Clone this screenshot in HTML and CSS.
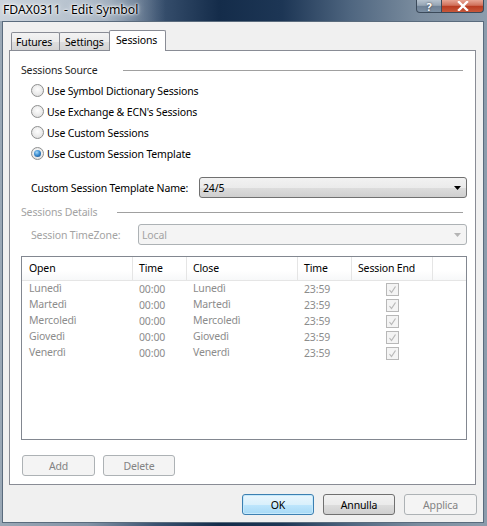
FILE: index.html
```html
<!DOCTYPE html>
<html>
<head>
<meta charset="utf-8">
<link rel="stylesheet" href="styles.css">
</head>
<body>
<div class="window">
  <div class="titlebar">
    <span class="title">FDAX0311 - Edit Symbol</span>
    <div class="caption-btns">
      <div class="cap help">?</div>
      <div class="cap close">
        <svg width="14" height="10" viewBox="0 0 14 10"><path d="M3 1 L11 9 M11 1 L3 9" stroke="#fff" stroke-width="2.4" stroke-linecap="square"/></svg>
      </div>
    </div>
  </div>
  <div class="client">
    <div class="tabs">
      <div class="tab t-futures">Futures</div>
      <div class="tab t-settings">Settings</div>
      <div class="tab t-sessions active">Sessions</div>
    </div>
    <div class="panel">
      <div class="section">
        <span class="sec-label src">Sessions Source</span>
        <span class="sec-line"></span>
      </div>
      <div class="radios">
        <div class="radio-row"><span class="radio"></span><span>Use Symbol Dictionary Sessions</span></div>
        <div class="radio-row"><span class="radio"></span><span>Use Exchange &amp; ECN's Sessions</span></div>
        <div class="radio-row"><span class="radio"></span><span>Use Custom Sessions</span></div>
        <div class="radio-row"><span class="radio checked"></span><span>Use Custom Session Template</span></div>
      </div>
      <div class="field-row tpl-row">
        <span class="field-label tpl-label">Custom Session Template Name:</span>
        <div class="combo tpl-combo">
          <span class="combo-text">24/5</span>
          <svg class="arrow" width="7" height="4" viewBox="0 0 7 4"><path d="M0 0 H7 L3.5 4 Z" fill="#000"/></svg>
        </div>
      </div>
      <div class="section details">
        <span class="sec-label det">Sessions Details</span>
        <span class="sec-line"></span>
      </div>
      <div class="field-row tz-row">
        <span class="field-label tz-label disabled">Session TimeZone:</span>
        <div class="combo tz-combo disabled-combo">
          <span class="combo-text">Local</span>
          <svg class="arrow" width="7" height="4" viewBox="0 0 7 4"><path d="M0 0 H7 L3.5 4 Z" fill="#b4b4b4"/></svg>
        </div>
      </div>
      <div class="list">
        <div class="list-head">
          <div class="col c-open">Open</div>
          <div class="col c-time">Time</div>
          <div class="col c-close">Close</div>
          <div class="col c-time">Time</div>
          <div class="col c-end">Session End</div>
          <div class="col c-fill"></div>
        </div>
        <div class="list-body">
          <div class="list-row">
            <div class="cell c-open day">Lunedì</div><div class="cell c-time">00:00</div>
            <div class="cell c-close day">Lunedì</div><div class="cell c-time">23:59</div>
            <div class="cell c-end chk-cell"><span class="chk"><svg width="11" height="11" viewBox="0 0 11 11"><path d="M2.5 6 L4.5 8.5 L8.5 2.5" fill="none" stroke="#b8b8b8" stroke-width="1.2"/></svg></span></div>
          </div>
          <div class="list-row">
            <div class="cell c-open day">Martedì</div><div class="cell c-time">00:00</div>
            <div class="cell c-close day">Martedì</div><div class="cell c-time">23:59</div>
            <div class="cell c-end chk-cell"><span class="chk"><svg width="11" height="11" viewBox="0 0 11 11"><path d="M2.5 6 L4.5 8.5 L8.5 2.5" fill="none" stroke="#b8b8b8" stroke-width="1.2"/></svg></span></div>
          </div>
          <div class="list-row">
            <div class="cell c-open day">Mercoledì</div><div class="cell c-time">00:00</div>
            <div class="cell c-close day">Mercoledì</div><div class="cell c-time">23:59</div>
            <div class="cell c-end chk-cell"><span class="chk"><svg width="11" height="11" viewBox="0 0 11 11"><path d="M2.5 6 L4.5 8.5 L8.5 2.5" fill="none" stroke="#b8b8b8" stroke-width="1.2"/></svg></span></div>
          </div>
          <div class="list-row">
            <div class="cell c-open day">Giovedì</div><div class="cell c-time">00:00</div>
            <div class="cell c-close day">Giovedì</div><div class="cell c-time">23:59</div>
            <div class="cell c-end chk-cell"><span class="chk"><svg width="11" height="11" viewBox="0 0 11 11"><path d="M2.5 6 L4.5 8.5 L8.5 2.5" fill="none" stroke="#b8b8b8" stroke-width="1.2"/></svg></span></div>
          </div>
          <div class="list-row">
            <div class="cell c-open day">Venerdì</div><div class="cell c-time">00:00</div>
            <div class="cell c-close day">Venerdì</div><div class="cell c-time">23:59</div>
            <div class="cell c-end chk-cell"><span class="chk"><svg width="11" height="11" viewBox="0 0 11 11"><path d="M2.5 6 L4.5 8.5 L8.5 2.5" fill="none" stroke="#b8b8b8" stroke-width="1.2"/></svg></span></div>
          </div>
        </div>
      </div>
      <div class="list-buttons">
        <div class="btn disabled-btn w73">Add</div>
        <div class="btn disabled-btn">Delete</div>
      </div>
    </div>
    <div class="dlg-buttons">
      <div class="btn default-btn">OK</div>
      <div class="btn">Annulla</div>
      <div class="btn disabled-btn w73">Applica</div>
    </div>
  </div>
</div>
</body>
</html>
```
FILE: styles.css
```css
* { box-sizing: border-box; }
html, body { margin: 0; padding: 0; }
body {
  width: 487px; height: 526px; overflow: hidden;
  font-family: "Noto Sans", "Open Sans", sans-serif;
  font-size: 10.5px;
  letter-spacing: -0.15px;
  color: #000;
}
.window {
  width: 487px; height: 526px;
  display: flex; flex-direction: column;
  background: linear-gradient(90deg, #9aa8b6 0%, #8393a6 18%, #3a5270 32%, #142c4a 45%, #1d3655 58%, #4f6680 72%, #7b8d9f 86%, #8c9cac 100%);
}
.titlebar {
  height: 21px; flex: none;
  display: flex; align-items: flex-start; justify-content: space-between;
  background: linear-gradient(90deg, rgba(215,222,230,0.8) 0%, rgba(200,210,220,0.6) 22%, rgba(200,210,220,0) 34%);
}
.title {
  font-size: 12.2px; line-height: 18px; padding-left: 3px; padding-top: 1px;
  letter-spacing: 0;
  color: #000;
  text-shadow: 0 0 6px #fff, 0 0 3px #fff, 0 0 2px #fff;
}
.caption-btns { display: flex; margin-right: 3px; }
.cap {
  height: 13px; border: 1px solid #3b4a5a; border-top: none;
  display: flex; align-items: center; justify-content: center;
  color: #fff; font-weight: bold; font-size: 11px; line-height: 11px;
}
.help {
  width: 26px; border-radius: 0 0 0 4px;
  background: linear-gradient(#b7c3cf 0%, #97a6b5 45%, #6f8195 50%, #7c8fa3 100%);
  text-shadow: 0 0 2px #333;
}
.close {
  width: 42px; border-left: none; border-radius: 0 0 4px 0;
  background: linear-gradient(#e7a594 0%, #d0705a 45%, #b83a20 50%, #c8583a 100%);
}
.client {
  flex: 1;
  margin: 0 3px 3px 2px;
  border: 1px solid #5a6b7d;
  background: #f0f0f0;
  display: flex; flex-direction: column;
}
.tabs {
  margin-top: 8px; margin-left: 8px;
  height: 20px;
  display: flex; align-items: flex-end;
  position: relative; z-index: 2;
}
.tab {
  height: 18px;
  border: 1px solid #898c95; border-bottom: none;
  background: linear-gradient(#f3f3f3 0%, #ebebeb 50%, #dedede 51%, #d4d4d4 100%);
  line-height: 18px;
  border-radius: 2px 2px 0 0;
}
.t-futures { width: 49px; padding-left: 4px; }
.t-settings { width: 51px; margin-left: -1px; padding-left: 5px; }
.t-sessions { width: 57px; margin-left: -1px; padding-left: 6px; }
.tab.active {
  height: 21px; margin-bottom: -1px;
  background: #fff; line-height: 19px;
}
.panel {
  margin-left: 6px;
  width: 467px; height: 435px;
  border: 1px solid #898c95;
  background: #fff;
  display: flex; flex-direction: column;
  padding-left: 11px; padding-right: 8px;
}
.section {
  margin-top: 11px; height: 16px;
  display: flex; align-items: center;
}
.section.details { margin-top: 6px; }
.sec-label { line-height: 16px; flex: none; }
.src { width: 102px; color: #1e1e1e; }
.det { width: 96px; color: #a3a3a3; }
.sec-line { flex: 1; height: 1px; background: #a0a0a0; margin-right: 4px; margin-top: 1px; }
.radios { margin-top: 2px; display: flex; flex-direction: column; }
.radio-row {
  height: 21px; display: flex; align-items: center;
  padding-left: 10px;
}
.radio {
  width: 13px; height: 13px; border-radius: 50%;
  border: 1px solid #8e8f8f;
  background: radial-gradient(circle at 50% 40%, #fdfdfd 0%, #f0f0f0 40%, #d9d9d9 100%);
  margin-right: 3px;
  display: flex; align-items: center; justify-content: center;
  flex: none;
}
.radio.checked::after {
  content: ""; width: 7px; height: 7px; border-radius: 50%;
  background: radial-gradient(circle at 40% 35%, #a6d8f7 0%, #3d8fd3 45%, #0d3f7a 100%);
}
.field-row { display: flex; align-items: center; height: 21px; padding-left: 10px; }
.tpl-row { margin-top: 13px; }
.tz-row { margin-top: 4px; }
.field-label { flex: none; white-space: nowrap; }
.tpl-label { width: 168px; }
.tz-label { width: 107px; }
.disabled { color: #a3a3a3; }
.combo {
  flex: 1; height: 21px;
  border: 1px solid #707070; border-radius: 3px;
  display: flex; align-items: center; justify-content: space-between;
  padding: 0 5px 0 3px;
}
.tpl-combo {
  background: linear-gradient(#f2f2f2 0%, #ebebeb 50%, #dddddd 51%, #cfcfcf 100%);
}
.disabled-combo {
  border-color: #adb2b5; background: #f4f4f4; color: #a3a3a3;
}
.combo-text { line-height: 16px; }
.list {
  margin-top: 11px;
  width: 446px; height: 184px;
  border: 1px solid #828790;
  background: #fff;
  display: flex; flex-direction: column;
}
.list-head {
  height: 24px; flex: none;
  display: flex;
  border-bottom: 1px solid #e5e5e5;
  background: linear-gradient(#ffffff 0%, #ffffff 60%, #f7f8f9 100%);
}
.col {
  border-right: 1px solid #e5e5e5;
  padding-left: 6px;
  line-height: 23px;
}
.c-open { width: 111px; padding-left: 7px; }
.c-time { width: 54px; }
.c-close { width: 111px; }
.c-end { width: 81px; }
.c-fill { flex: 1; border-right: none; }
.list-body { padding-top: 0; }
.list-row { height: 16px; display: flex; align-items: center; color: #8c8c8c; }
.cell { padding-left: 6px; line-height: 14px; }
.cell.c-open { padding-left: 7px; }
.cell.day { padding-bottom: 3px; }
.chk-cell { display: flex; justify-content: center; padding-left: 0; }
.chk {
  width: 13px; height: 13px;
  border: 1px solid #b8b8b8; background: #f4f4f4;
  display: flex; align-items: center; justify-content: center;
}
.list-buttons { margin-top: 15px; display: flex; gap: 8px; margin-left: 1px; }
.btn {
  width: 72px; height: 21px;
  border: 1px solid #707070; border-radius: 3px;
  background: linear-gradient(#f2f2f2 0%, #ebebeb 50%, #dddddd 51%, #cfcfcf 100%);
  display: flex; align-items: center; justify-content: center;
}
.w73 { width: 73px; }
.disabled-btn {
  border-color: #adb2b5; background: #f4f4f4; color: #838383;
}
.default-btn {
  border-color: #3c7fb1;
  background: linear-gradient(#eaf6fd 0%, #d9f0fc 50%, #bee6fd 51%, #a7d9f5 100%);
  box-shadow: inset 0 0 0 1px #c6e9fb;
}
.dlg-buttons {
  margin-top: 9px; display: flex; gap: 9px;
  justify-content: flex-end; margin-right: 6px;
}
```
